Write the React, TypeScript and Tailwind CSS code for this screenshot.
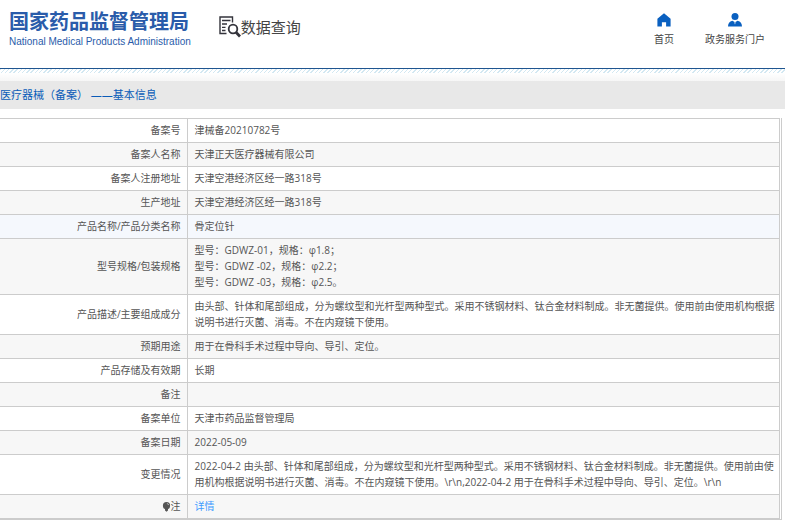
type RecordRow = {
  label: string;
  lines: string[];
  hint?: boolean;
  link?: boolean;
  active?: boolean;
};

const records: RecordRow[] = [
  { label: '备案号', lines: ['津械备20210782号'] },
  { label: '备案人名称', lines: ['天津正天医疗器械有限公司'] },
  { label: '备案人注册地址', lines: ['天津空港经济区经一路318号'] },
  { label: '生产地址', lines: ['天津空港经济区经一路318号'] },
  { label: '产品名称/产品分类名称', lines: ['骨定位针'], active: true },
  {
    label: '型号规格/包装规格',
    lines: ['型号：GDWZ-01，规格：φ1.8；', '型号：GDWZ -02，规格：φ2.2；', '型号：GDWZ -03，规格：φ2.5。'],
  },
  {
    label: '产品描述/主要组成成分',
    lines: [
      '由头部、针体和尾部组成，分为螺纹型和光杆型两种型式。采用不锈钢材料、钛合金材料制成。非无菌提供。使用前由使用机构根据说明书进行灭菌、消毒。不在内窥镜下使用。',
    ],
  },
  { label: '预期用途', lines: ['用于在骨科手术过程中导向、导引、定位。'] },
  { label: '产品存储及有效期', lines: ['长期'] },
  { label: '备注', lines: [''] },
  { label: '备案单位', lines: ['天津市药品监督管理局'] },
  { label: '备案日期', lines: ['2022-05-09'] },
  {
    label: '变更情况',
    lines: [
      '2022-04-2 由头部、针体和尾部组成，分为螺纹型和光杆型两种型式。采用不锈钢材料、钛合金材料制成。非无菌提供。使用前由使用机构根据说明书进行灭菌、消毒。不在内窥镜下使用。\\r\\n,2022-04-2 用于在骨科手术过程中导向、导引、定位。\\r\\n',
    ],
  },
  { label: '注', lines: ['详情'], hint: true, link: true },
];

function SearchDocIcon() {
  return (
    <svg width="22" height="22" viewBox="0 0 22 22" fill="none" stroke="#33333b">
      <path d="M13.5 6.5V1H1v16.5h6.5" strokeWidth="1.4" />
      <path d="M3 4.5h8.5M3 8h5M3 11.3h3.5M3 14.5h3.5" strokeWidth="1.3" />
      <circle cx="14" cy="13" r="4.3" strokeWidth="1.8" />
      <path d="M17 16.3l4 4.2" strokeWidth="2.8" />
    </svg>
  );
}

function HomeIcon() {
  return (
    <svg width="14" height="14" viewBox="0 0 14 14" fill="#0a60c0">
      <path d="M7 .3 .4 5.8v7.7h4.5V9.2h4.2v4.3h4.5V5.8z" />
    </svg>
  );
}

function UserIcon() {
  return (
    <svg width="14" height="14" viewBox="0 0 14 14" fill="#0a60c0">
      <circle cx="7" cy="3.6" r="3.5" />
      <path d="M0 13.5c0-3.2 1.4-5.2 4.4-5.8L7 9.2l2.6-1.5c3 .6 4.4 2.6 4.4 5.8z" />
      <path d="M6.3 9.2h1.4L7 11.4z" fill="#fff" />
    </svg>
  );
}

function HintIcon() {
  return (
    <svg className="inline-block align-middle" width="9" height="10" viewBox="0 0 9 10" fill="#555">
      <circle cx="4.5" cy="3.7" r="3.6" />
      <path d="M3 6.5h3v2L4.5 9.8 3 8.5z" />
      <path d="M4.9 1.5c1 .1 1.6.7 1.8 1.6" fill="none" stroke="#ddd" strokeWidth=".7" />
    </svg>
  );
}

function Header() {
  return (
    <header className="flex h-[69px] items-start justify-between border-b border-[#1f5590] pr-5 pl-[9px]">
      <div className="flex items-start gap-7">
        <a href="#" className="block pt-3 text-[#2a5caa]">
          <span className="block text-[20px] leading-5 font-bold whitespace-nowrap">国家药品监督管理局</span>
          <span className="block pt-1 font-['Liberation_Sans'] text-[10px] leading-3 whitespace-nowrap">
            National Medical Products Administration
          </span>
        </a>
        <h1 className="flex items-center pt-4 text-[15px] leading-5 whitespace-nowrap text-[#444]">
          <SearchDocIcon />
          数据查询
        </h1>
      </div>
      <nav className="flex gap-[31px] pt-[13px] text-[10px] leading-4 whitespace-nowrap text-[#444]">
        <a href="#" className="flex flex-col items-center gap-1">
          <HomeIcon />
          首页
        </a>
        <a href="#" className="flex flex-col items-center gap-1">
          <UserIcon />
          政务服务门户
        </a>
      </nav>
    </header>
  );
}

function RecordTable() {
  return (
    <div className="mr-[3px] border-r border-b border-[#ccc] pr-px">
      <table className="w-full border-collapse border-t border-r border-[#ccc] text-[10px] leading-4 text-[#555]">
        <tbody>
          {records.map((row) => (
            <tr key={row.label} className={row.active ? 'bg-[#f5f8fd]' : 'odd:bg-white even:bg-[#f7f7f7]'}>
              <th
                scope="row"
                className="w-[24%] border-r border-b border-[#ccc] pt-[3px] pr-1.5 pb-1 text-right align-middle font-normal"
              >
                {row.hint && <HintIcon />}
                {row.label}
              </th>
              <td className="border-b border-[#ccc] pt-[3px] pb-1 pl-[7px]">
                {row.lines.map((line, i) => (
                  <p key={i} className="min-h-4">
                    {row.link ? <a href="#" className="text-[#3d9bff]">{line}</a> : line}
                  </p>
                ))}
              </td>
            </tr>
          ))}
        </tbody>
      </table>
    </div>
  );
}

export default function App() {
  return (
    <div lang="zh-CN" className="min-h-screen bg-white font-['Open_Sans','Noto_Sans_CJK_SC',sans-serif]">
      <Header />
      <div className="h-1 bg-[repeating-linear-gradient(135deg,#d3e8f2_0px,#d3e8f2_1px,#ffffff_1px,#ffffff_3px)]" />
      <div className="h-2 bg-linear-to-b from-white to-[#f6f6f6]" />
      <h2 className="bg-[#e8e8e8] py-1 text-[11px] leading-5 text-[#0a5cb8]">医疗器械（备案） ——基本信息</h2>
      <main className="pt-[9px]">
        <RecordTable />
      </main>
    </div>
  );
}
